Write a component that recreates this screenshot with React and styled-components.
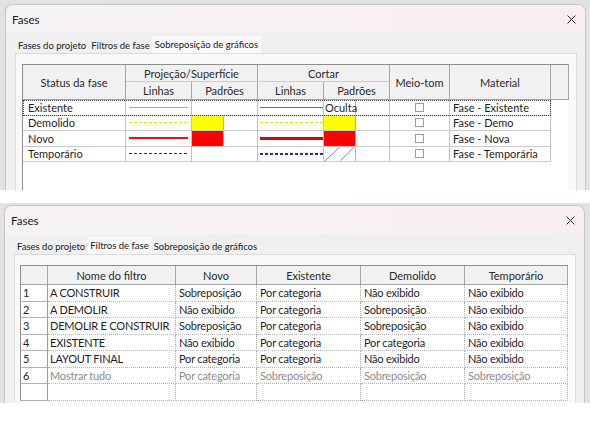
import React from 'react';
import styled, { createGlobalStyle } from 'styled-components';

const GlobalStyle = createGlobalStyle`
  html, body {
    margin: 0;
    padding: 0;
    background: #ffffff;
  }
  body {
    font-family: Lato, "Liberation Sans", sans-serif;
    color: #1e1e1e;
  }
`;

const PHASE_COLS = [103, 66, 66, 66, 66, 60, 101];
const FILTER_COLS = [27, 128, 81, 104, 104, 103];
const toTemplate = (cols) => cols.map((c) => `${c}px`).join(' ');

const phases = [
  {
    name: 'Existente',
    projLine: { color: '#a8a8a8', weight: 1 },
    projFill: null,
    cutLine: { color: '#6c6c6c', weight: 1 },
    cutFill: 'hidden',
    material: 'Fase - Existente',
    focus: true,
  },
  {
    name: 'Demolido',
    projLine: { color: '#e4e400', weight: 1, dashed: true },
    projFill: '#ffff00',
    cutLine: { color: '#e4e400', weight: 1, dashed: true },
    cutFill: '#ffff00',
    material: 'Fase - Demo',
  },
  {
    name: 'Novo',
    projLine: { color: '#e01818', weight: 2 },
    projFill: '#ff0000',
    cutLine: { color: '#c80c0c', weight: 3 },
    cutFill: '#ff0000',
    material: 'Fase - Nova',
  },
  {
    name: 'Temporário',
    projLine: { color: '#2c2c8c', weight: 1, dashed: true },
    projFill: null,
    cutLine: { color: '#2c2c8c', weight: 2, dashed: true },
    cutFill: 'hatch',
    material: 'Fase - Temporária',
  },
];

const filters = [
  ['1', 'A CONSTRUIR', 'Sobreposição', 'Por categoria', 'Não exibido', 'Não exibido'],
  ['2', 'A DEMOLIR', 'Não exibido', 'Por categoria', 'Sobreposição', 'Não exibido'],
  ['3', 'DEMOLIR E CONSTRUIR', 'Sobreposição', 'Por categoria', 'Sobreposição', 'Não exibido'],
  ['4', 'EXISTENTE', 'Não exibido', 'Por categoria', 'Por categoria', 'Não exibido'],
  ['5', 'LAYOUT FINAL', 'Por categoria', 'Por categoria', 'Não exibido', 'Não exibido'],
  ['6', 'Mostrar tudo', 'Por categoria', 'Sobreposição', 'Sobreposição', 'Sobreposição'],
  ['', '', '', '', '', ''],
];

const tabs = ['Fases do projeto', 'Filtros de fase', 'Sobreposição de gráficos'];

const App = () => {
  return (
    <Page>
      <GlobalStyle />
      <Shot $height={190} $top={4} $left={5}>
        <DialogWindow active={2}>
          <GridArea>
            <PhaseTable />
          </GridArea>
        </DialogWindow>
      </Shot>
      <Shot $height={200} $top={2} $left={4}>
        <DialogWindow active={1}>
          <FilterTable />
        </DialogWindow>
      </Shot>
    </Page>
  );
};

const DialogWindow = ({ active, children }) => (
  <Window>
    <TitleBar>
      <span>Fases</span>
      <CloseIcon viewBox="0 0 9 9">
        <path d="M0.5 0.5 L8.5 8.5 M8.5 0.5 L0.5 8.5" />
      </CloseIcon>
    </TitleBar>
    <Body>
      <TabStrip>
        {tabs.map((t, i) => (
          <Tab key={t} $active={i === active}>
            {t}
          </Tab>
        ))}
      </TabStrip>
      <Panel>{children}</Panel>
    </Body>
  </Window>
);

const LineCell = ({ line, full }) => (
  <Cell>
    <LineMark
      $color={line.color}
      $weight={line.weight}
      $dashed={line.dashed}
      $left={full ? 2 : 3}
      $right={full ? 0 : 3}
    />
  </Cell>
);

const FillCell = ({ fill }) => {
  if (!fill) return <Cell />;
  if (fill === 'hidden') {
    return (
      <Cell>
        <Swatch>Oculta</Swatch>
      </Cell>
    );
  }
  if (fill === 'hatch') {
    return (
      <Cell>
        <Swatch>
          <svg width="31" height="15" viewBox="0 0 31 15">
            <path d="M0 15 L15 1 M16 15 L31 0" stroke="#7c7cc4" strokeWidth="1" fill="none" />
          </svg>
        </Swatch>
      </Cell>
    );
  }
  return (
    <Cell>
      <Swatch $fill={fill} />
    </Cell>
  );
};

const PhaseTable = () => (
  <div>
    <HeadGrid $cols={toTemplate([...PHASE_COLS, 18])} $rows="17px 18px">
      <HeadCell $rowSpan={2}>Status da fase</HeadCell>
      <HeadCell $colSpan={2} $soft>Projeção/Superfície</HeadCell>
      <HeadCell $colSpan={2} $soft>Cortar</HeadCell>
      <HeadCell $rowSpan={2}>Meio-tom</HeadCell>
      <HeadCell $rowSpan={2}>Material</HeadCell>
      <HeadCell $rowSpan={2} />
      <HeadCell>Linhas</HeadCell>
      <HeadCell>Padrões</HeadCell>
      <HeadCell>Linhas</HeadCell>
      <HeadCell>Padrões</HeadCell>
    </HeadGrid>
    {phases.map((p) => (
      <Row key={p.name} $cols={toTemplate(PHASE_COLS)} $height={15.5} $focus={p.focus}>
        <Cell $pad={5}>{p.name}</Cell>
        <LineCell line={p.projLine} />
        <FillCell fill={p.projFill} />
        <LineCell line={p.cutLine} full />
        <FillCell fill={p.cutFill} />
        <Cell $center>
          <CheckBox />
        </Cell>
        <Cell $pad={3}>{p.material}</Cell>
      </Row>
    ))}
  </div>
);

const FilterTable = () => (
  <div>
    <HeadGrid $cols={toTemplate(FILTER_COLS)} $rows="19px">
      <HeadCell />
      <HeadCell>Nome do filtro</HeadCell>
      <HeadCell>Novo</HeadCell>
      <HeadCell>Existente</HeadCell>
      <HeadCell>Demolido</HeadCell>
      <HeadCell>Temporário</HeadCell>
    </HeadGrid>
    {filters.map((f, i) => (
      <Row key={i} $cols={toTemplate(FILTER_COLS)} $height={16.5}>
        <NumCell>{f[0]}</NumCell>
        {f.slice(1).map((v, j) => (
          <FilterCell key={j} $muted={f[0] === '6'} $pad={j === 0 ? 2 : 3}>
            {v}
          </FilterCell>
        ))}
      </Row>
    ))}
  </div>
);

const Page = styled.div`
  width: 590px;
  height: 424px;
  display: flex;
  flex-direction: column;
  gap: 13px;
  background: #ffffff;
  overflow: hidden;
`;

const Shot = styled.div`
  flex: none;
  height: ${(p) => p.$height}px;
  box-sizing: border-box;
  padding: ${(p) => p.$top}px 0 0 ${(p) => p.$left}px;
  background: #e2e2e2;
  overflow: hidden;
`;

const Window = styled.div`
  width: 581px;
  height: calc(100% + 20px);
  box-sizing: border-box;
  border: 1px solid #c4c4c4;
  border-bottom: none;
  border-radius: 8px 8px 0 0;
  background: #f0f0f0;
  display: flex;
  flex-direction: column;
  overflow: hidden;
`;

const TitleBar = styled.div`
  flex: none;
  height: 28px;
  display: flex;
  align-items: center;
  justify-content: space-between;
  padding: 0 9px 0 6px;
  background: linear-gradient(to right, #f6f3f5, #f9eef4);
  font-size: 11.5px;
  color: #1a1a1a;
`;

const CloseIcon = styled.svg`
  width: 9px;
  height: 9px;
  stroke: #2a2a2a;
  stroke-width: 1;
  fill: none;
`;

const Body = styled.div`
  flex: 1;
  display: flex;
  flex-direction: column;
  padding: 4px 8px 0 9px;
`;

const TabStrip = styled.div`
  flex: none;
  height: 16px;
  display: flex;
  align-items: flex-end;
  gap: 1px;
  padding-left: 1px;
`;

const Tab = styled.div`
  height: ${(p) => (p.$active ? 17 : 15)}px;
  margin: 0 ${(p) => (p.$active ? -1 : 0)}px;
  padding: 0 ${(p) => (p.$active ? 3 : 2)}px;
  display: flex;
  align-items: center;
  background: ${(p) => (p.$active ? '#f9f9f9' : '#f0f0f0')};
  font-size: 9.5px;
  color: #1a1a1a;
  white-space: nowrap;
  position: relative;
  z-index: ${(p) => (p.$active ? 1 : 0)};
`;

const Panel = styled.div`
  flex: 1;
  display: flex;
  flex-direction: column;
  padding: 10px 8px 0 6px;
  background: #f9f9f9;
  border: 1px solid #dcdcdc;
`;

const GridArea = styled.div`
  flex: 1;
  width: 546px;
  box-sizing: border-box;
  background: #ffffff;
  border-left: 1px solid #8e8e8e;
`;

const HeadGrid = styled.div`
  display: grid;
  grid-template-columns: ${(p) => p.$cols};
  grid-template-rows: ${(p) => p.$rows};
  border-top: 1px solid #8e8e8e;
  border-left: 1px solid #8e8e8e;
  margin-left: -1px;
  width: max-content;
`;

const HeadCell = styled.div`
  box-sizing: border-box;
  grid-column: span ${(p) => p.$colSpan || 1};
  grid-row: span ${(p) => p.$rowSpan || 1};
  display: flex;
  align-items: center;
  justify-content: center;
  background: #f1f1f1;
  border-right: 1px solid #a4a4a4;
  border-bottom: 1px solid ${(p) => (p.$soft ? '#cdcdcd' : '#a4a4a4')};
  font-size: 11px;
  color: #2a2a2a;
  white-space: nowrap;
`;

const Row = styled.div`
  display: grid;
  grid-template-columns: ${(p) => p.$cols};
  height: ${(p) => p.$height}px;
  width: max-content;
  background: #ffffff;
  outline: ${(p) => (p.$focus ? '1px dotted #444' : 'none')};
  outline-offset: -1px;
`;

const Cell = styled.div`
  box-sizing: border-box;
  display: flex;
  align-items: center;
  justify-content: ${(p) => (p.$center ? 'center' : 'flex-start')};
  padding-left: ${(p) => p.$pad || 0}px;
  border-right: 1px solid #c2c2c2;
  border-bottom: 1px solid #cacaca;
  font-size: 11px;
  white-space: nowrap;
  overflow: hidden;
`;

const LineMark = styled.div`
  flex: 1;
  height: ${(p) => p.$weight}px;
  margin: 0 ${(p) => p.$right}px 0 ${(p) => p.$left}px;
  background: ${(p) =>
    p.$dashed
      ? `repeating-linear-gradient(90deg, ${p.$color} 0 3px, transparent 3px 5px)`
      : p.$color};
`;

const Swatch = styled.div`
  width: 32px;
  align-self: stretch;
  box-sizing: border-box;
  display: flex;
  align-items: center;
  padding-left: 1px;
  background: ${(p) => p.$fill || '#ffffff'};
  border-right: 1px solid #b2b2b2;
  font-size: 11px;
`;

const CheckBox = styled.div`
  width: 9px;
  height: 9px;
  box-sizing: border-box;
  border: 1px solid #9c9c9c;
  background: #ffffff;
`;

const NumCell = styled.div`
  box-sizing: border-box;
  display: flex;
  align-items: center;
  padding-left: 2px;
  border-left: 1px solid #8e8e8e;
  margin-left: -1px;
  border-right: 1px solid #9a9a9a;
  border-bottom: 1px solid #b4b4b4;
  font-size: 11px;
`;

const FilterCell = styled.div`
  box-sizing: border-box;
  display: flex;
  align-items: center;
  padding-left: ${(p) => p.$pad}px;
  border-right: 1px dotted #a8a8a8;
  border-bottom: 1px dotted #b4b4b4;
  font-size: 11px;
  letter-spacing: -0.2px;
  color: ${(p) => (p.$muted ? '#8c8c8c' : '#1e1e1e')};
  white-space: nowrap;
  overflow: hidden;
`;

export default App;
